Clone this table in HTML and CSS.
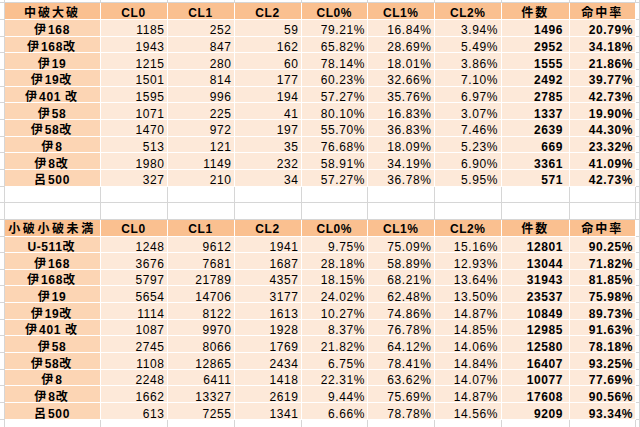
FILE: index.html
```html
<!DOCTYPE html>
<html lang="ja">
<head>
<meta charset="utf-8">
<title>潜水艦 命中率</title>
<link rel="stylesheet" href="styles.css">
</head>
<body>
<div class="sheet">
  <div class="row top"><span></span><span></span><span></span><span></span><span></span><span></span><span></span><span></span><span></span><span></span><span></span></div>

  <div class="row"><span></span><span class="h"><span class="ja">中破大破</span></span><span class="h">CL0</span><span class="h">CL1</span><span class="h">CL2</span><span class="h">CL0%</span><span class="h">CL1%</span><span class="h">CL2%</span><span class="h"><span class="ja">件数</span></span><span class="h"><span class="ja">命中率</span></span><span></span></div>
  <div class="row"><span></span><span class="n"><span class="ja">伊</span>168</span><span class="v">1185</span><span class="v">252</span><span class="v">59</span><span class="v">79.21%</span><span class="v">16.84%</span><span class="v p">3.94%</span><span class="v b k">1496</span><span class="v b">20.79%</span><span></span></div>
  <div class="row"><span></span><span class="n"><span class="ja">伊</span>168<span class="ja">改</span></span><span class="v">1943</span><span class="v">847</span><span class="v">162</span><span class="v">65.82%</span><span class="v">28.69%</span><span class="v p">5.49%</span><span class="v b k">2952</span><span class="v b">34.18%</span><span></span></div>
  <div class="row"><span></span><span class="n"><span class="ja">伊</span>19</span><span class="v">1215</span><span class="v">280</span><span class="v">60</span><span class="v">78.14%</span><span class="v">18.01%</span><span class="v p">3.86%</span><span class="v b k">1555</span><span class="v b">21.86%</span><span></span></div>
  <div class="row"><span></span><span class="n"><span class="ja">伊</span>19<span class="ja">改</span></span><span class="v">1501</span><span class="v">814</span><span class="v">177</span><span class="v">60.23%</span><span class="v">32.66%</span><span class="v p">7.10%</span><span class="v b k">2492</span><span class="v b">39.77%</span><span></span></div>
  <div class="row"><span></span><span class="n"><span class="ja">伊</span>401 <span class="ja">改</span></span><span class="v">1595</span><span class="v">996</span><span class="v">194</span><span class="v">57.27%</span><span class="v">35.76%</span><span class="v p">6.97%</span><span class="v b k">2785</span><span class="v b">42.73%</span><span></span></div>
  <div class="row"><span></span><span class="n"><span class="ja">伊</span>58</span><span class="v">1071</span><span class="v">225</span><span class="v">41</span><span class="v">80.10%</span><span class="v">16.83%</span><span class="v p">3.07%</span><span class="v b k">1337</span><span class="v b">19.90%</span><span></span></div>
  <div class="row"><span></span><span class="n"><span class="ja">伊</span>58<span class="ja">改</span></span><span class="v">1470</span><span class="v">972</span><span class="v">197</span><span class="v">55.70%</span><span class="v">36.83%</span><span class="v p">7.46%</span><span class="v b k">2639</span><span class="v b">44.30%</span><span></span></div>
  <div class="row"><span></span><span class="n"><span class="ja">伊</span>8</span><span class="v">513</span><span class="v">121</span><span class="v">35</span><span class="v">76.68%</span><span class="v">18.09%</span><span class="v p">5.23%</span><span class="v b k">669</span><span class="v b">23.32%</span><span></span></div>
  <div class="row"><span></span><span class="n"><span class="ja">伊</span>8<span class="ja">改</span></span><span class="v">1980</span><span class="v">1149</span><span class="v">232</span><span class="v">58.91%</span><span class="v">34.19%</span><span class="v p">6.90%</span><span class="v b k">3361</span><span class="v b">41.09%</span><span></span></div>
  <div class="row"><span></span><span class="n"><span class="ja">呂</span>500</span><span class="v">327</span><span class="v">210</span><span class="v">34</span><span class="v">57.27%</span><span class="v">36.78%</span><span class="v p">5.95%</span><span class="v b k">571</span><span class="v b">42.73%</span><span></span></div>

  <div class="row"><span></span><span></span><span></span><span></span><span></span><span></span><span></span><span></span><span></span><span></span><span></span></div>
  <div class="row"><span></span><span></span><span></span><span></span><span></span><span></span><span></span><span></span><span></span><span></span><span></span></div>

  <div class="row"><span></span><span class="h"><span class="ja wide">小破小破未満</span></span><span class="h">CL0</span><span class="h">CL1</span><span class="h">CL2</span><span class="h">CL0%</span><span class="h">CL1%</span><span class="h">CL2%</span><span class="h"><span class="ja">件数</span></span><span class="h"><span class="ja">命中率</span></span><span></span></div>
  <div class="row"><span></span><span class="n">U-511<span class="ja">改</span></span><span class="v">1248</span><span class="v">9612</span><span class="v">1941</span><span class="v">9.75%</span><span class="v">75.09%</span><span class="v p">15.16%</span><span class="v b k">12801</span><span class="v b">90.25%</span><span></span></div>
  <div class="row"><span></span><span class="n"><span class="ja">伊</span>168</span><span class="v">3676</span><span class="v">7681</span><span class="v">1687</span><span class="v">28.18%</span><span class="v">58.89%</span><span class="v p">12.93%</span><span class="v b k">13044</span><span class="v b">71.82%</span><span></span></div>
  <div class="row"><span></span><span class="n"><span class="ja">伊</span>168<span class="ja">改</span></span><span class="v">5797</span><span class="v">21789</span><span class="v">4357</span><span class="v">18.15%</span><span class="v">68.21%</span><span class="v p">13.64%</span><span class="v b k">31943</span><span class="v b">81.85%</span><span></span></div>
  <div class="row"><span></span><span class="n"><span class="ja">伊</span>19</span><span class="v">5654</span><span class="v">14706</span><span class="v">3177</span><span class="v">24.02%</span><span class="v">62.48%</span><span class="v p">13.50%</span><span class="v b k">23537</span><span class="v b">75.98%</span><span></span></div>
  <div class="row"><span></span><span class="n"><span class="ja">伊</span>19<span class="ja">改</span></span><span class="v">1114</span><span class="v">8122</span><span class="v">1613</span><span class="v">10.27%</span><span class="v">74.86%</span><span class="v p">14.87%</span><span class="v b k">10849</span><span class="v b">89.73%</span><span></span></div>
  <div class="row"><span></span><span class="n"><span class="ja">伊</span>401 <span class="ja">改</span></span><span class="v">1087</span><span class="v">9970</span><span class="v">1928</span><span class="v">8.37%</span><span class="v">76.78%</span><span class="v p">14.85%</span><span class="v b k">12985</span><span class="v b">91.63%</span><span></span></div>
  <div class="row"><span></span><span class="n"><span class="ja">伊</span>58</span><span class="v">2745</span><span class="v">8066</span><span class="v">1769</span><span class="v">21.82%</span><span class="v">64.12%</span><span class="v p">14.06%</span><span class="v b k">12580</span><span class="v b">78.18%</span><span></span></div>
  <div class="row"><span></span><span class="n"><span class="ja">伊</span>58<span class="ja">改</span></span><span class="v">1108</span><span class="v">12865</span><span class="v">2434</span><span class="v">6.75%</span><span class="v">78.41%</span><span class="v p">14.84%</span><span class="v b k">16407</span><span class="v b">93.25%</span><span></span></div>
  <div class="row"><span></span><span class="n"><span class="ja">伊</span>8</span><span class="v">2248</span><span class="v">6411</span><span class="v">1418</span><span class="v">22.31%</span><span class="v">63.62%</span><span class="v p">14.07%</span><span class="v b k">10077</span><span class="v b">77.69%</span><span></span></div>
  <div class="row"><span></span><span class="n"><span class="ja">伊</span>8<span class="ja">改</span></span><span class="v">1662</span><span class="v">13327</span><span class="v">2619</span><span class="v">9.44%</span><span class="v">75.69%</span><span class="v p">14.87%</span><span class="v b k">17608</span><span class="v b">90.56%</span><span></span></div>
  <div class="row"><span></span><span class="n"><span class="ja">呂</span>500</span><span class="v">613</span><span class="v">7255</span><span class="v">1341</span><span class="v">6.66%</span><span class="v">78.78%</span><span class="v p">14.56%</span><span class="v b k">9209</span><span class="v b">93.34%</span><span></span></div>

  <div class="row"><span></span><span></span><span></span><span></span><span></span><span></span><span></span><span></span><span></span><span></span><span></span></div>
</div>
</body>
</html>
```
FILE: styles.css
```css
html, body {
  margin: 0;
  padding: 0;
  background: #ffffff;
}

body {
  width: 640px;
  height: 427px;
  overflow: hidden;
  font-family: "Liberation Sans", "Noto Sans CJK JP", sans-serif;
  font-size: 12px;
  color: #000000;
}

.sheet {
  display: flex;
  flex-direction: column;
}

.row {
  display: grid;
  grid-template-columns: 4.5px 96px 67px 67px 67px 66.5px 66.5px 67.5px 67.5px 66.5px 1fr;
  grid-template-rows: minmax(0, 1fr);
  height: 16.667px;
  flex: none;
}

.row.top {
  height: 3.333px;
}

.row > span {
  box-sizing: border-box;
  min-width: 0;
  min-height: 0;
  border-right: 1px solid #d6d6d6;
  border-bottom: 1px solid #d6d6d6;
  white-space: nowrap;
  letter-spacing: 0.6px;
  line-height: 16px;
}

.row > .h {
  background: #fac090;
  border-color: #ffffff;
  font-weight: bold;
  text-align: center;
  padding-top: 1.5px;
}

.row > .n {
  background: #fcd5b4;
  border-color: #ffffff;
  font-weight: bold;
  text-align: center;
  padding-top: 2.5px;
}

.row > .v {
  background: #fde9d9;
  border-color: #ffffff;
  text-align: right;
  padding-top: 2.5px;
  padding-right: 2px;
}

.row > .p {
  padding-right: 3px;
}

.row > .b {
  font-weight: bold;
}

.row > .k {
  padding-right: 5.5px;
}

.ja {
  letter-spacing: 2px;
}

.ja.wide {
  letter-spacing: 2.6px;
}
```
